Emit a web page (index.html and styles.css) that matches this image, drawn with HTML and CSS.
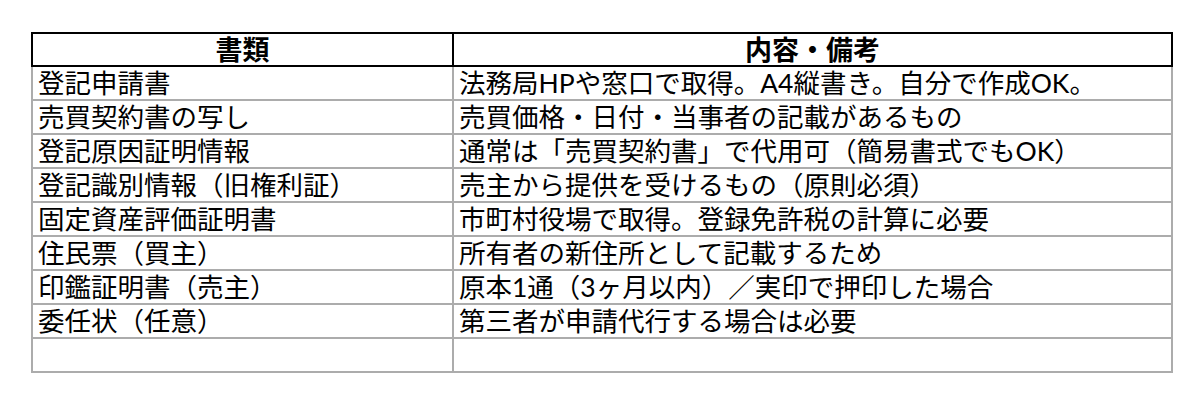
FILE: index.html
```html
<!DOCTYPE html>
<html lang="ja">
<head>
<meta charset="utf-8">
<link rel="stylesheet" href="styles.css">
</head>
<body>
<table class="docs">
  <colgroup><col class="c1"><col class="c2"></colgroup>
  <thead>
    <tr><th>書類</th><th>内容・備考</th></tr>
  </thead>
  <tbody>
    <tr><td>登記申請書</td><td>法務局HPや窓口で取得。A4縦書き。自分で作成OK。</td></tr>
    <tr><td>売買契約書の写し</td><td>売買価格・日付・当事者の記載があるもの</td></tr>
    <tr><td>登記原因証明情報</td><td>通常は「売買契約書」で代用可（簡易書式でもOK）</td></tr>
    <tr><td>登記識別情報（旧権利証）</td><td>売主から提供を受けるもの（原則必須）</td></tr>
    <tr><td>固定資産評価証明書</td><td>市町村役場で取得。登録免許税の計算に必要</td></tr>
    <tr><td>住民票（買主）</td><td>所有者の新住所として記載するため</td></tr>
    <tr><td>印鑑証明書（売主）</td><td>原本1通（3ヶ月以内）／実印で押印した場合</td></tr>
    <tr><td>委任状（任意）</td><td>第三者が申請代行する場合は必要</td></tr>
    <tr><td class="empty"></td><td class="empty"></td></tr>
  </tbody>
</table>
</body>
</html>
```

FILE: styles.css
```css
html, body {
  margin: 0;
  padding: 0;
  background: #ffffff;
}
body {
  padding: 32px 0 0 31px;
  font-family: Lato, "Noto Sans CJK JP", sans-serif;
  color: #000;
}
.docs {
  border-collapse: collapse;
  width: 1140px;
  table-layout: fixed;
}
.c1 { width: 421px; }
.c2 { width: 719px; }
.docs th {
  border: 2px solid #000;
  font-size: 27px;
  font-weight: bold;
  line-height: 31px;
  height: 31px;
  padding: 0;
  text-align: center;
}
.docs td {
  border: 2px solid #acacac;
  font-size: 26.5px;
  line-height: 32px;
  height: 32px;
  padding: 0 5px;
  text-align: left;
  white-space: nowrap;
  vertical-align: middle;
}
```
